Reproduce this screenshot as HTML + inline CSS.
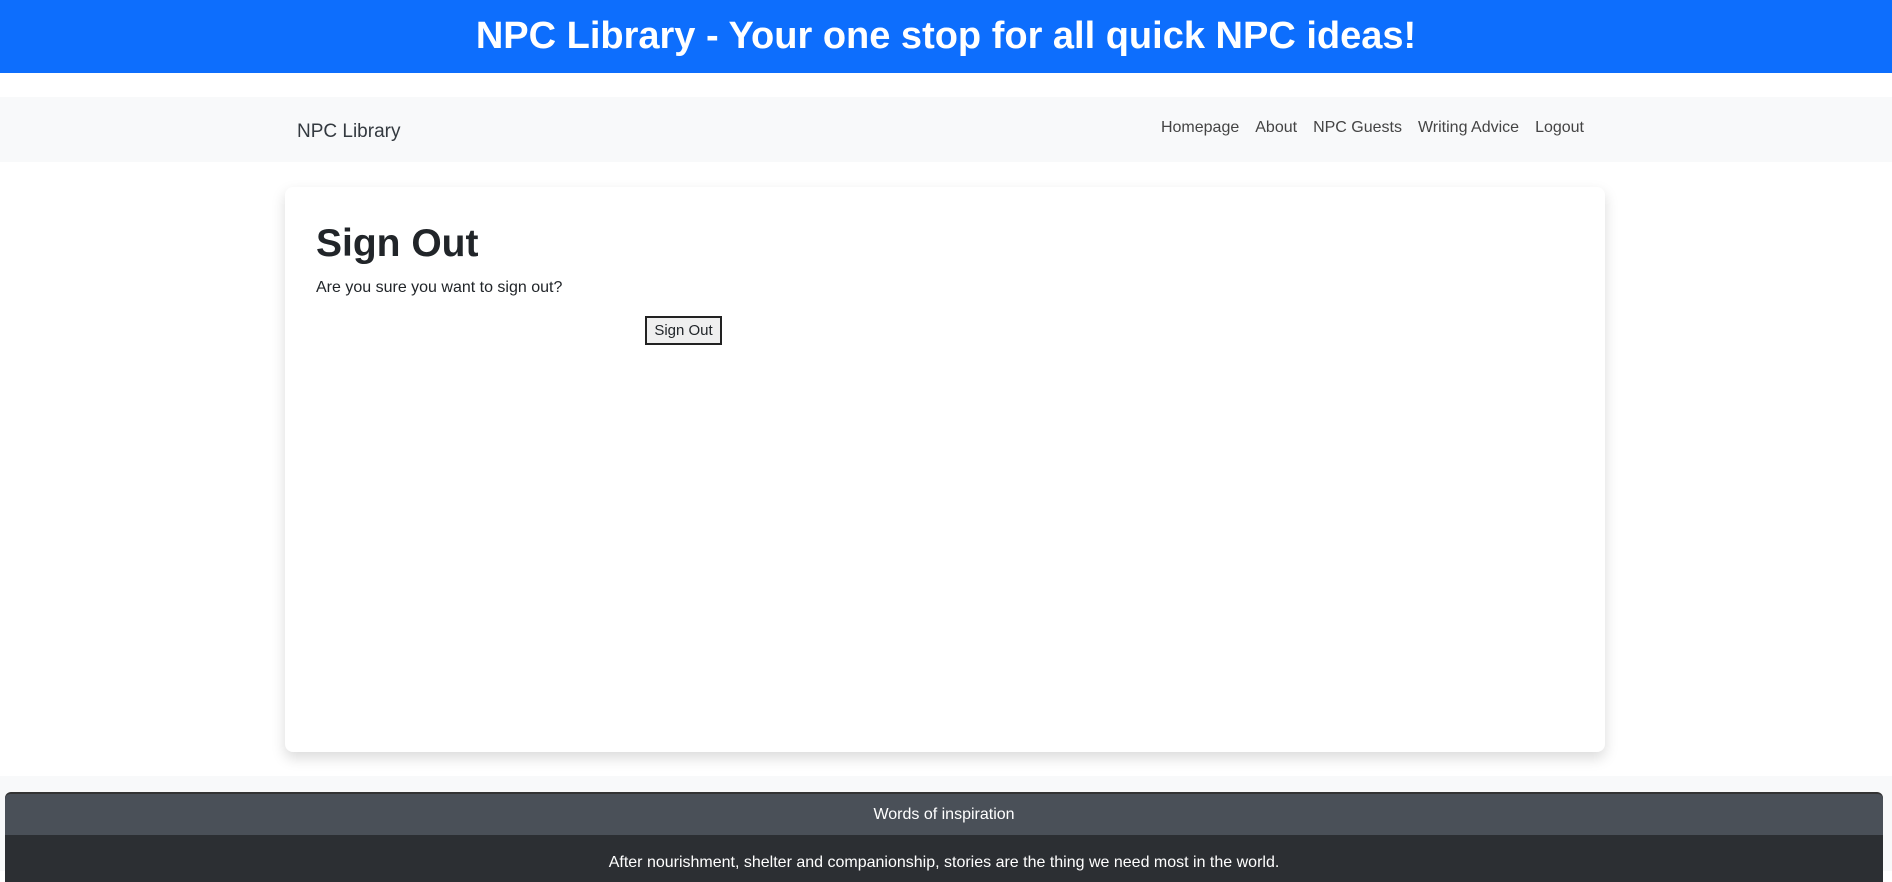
<!DOCTYPE html>
<html><head><meta charset="utf-8"><style>
*{box-sizing:border-box;margin:0;padding:0}
body{width:1892px;height:871px;overflow:hidden;background:#fff;font-family:"Liberation Sans",sans-serif;color:#212529;position:relative}
.top{position:absolute;left:0;top:0;width:1892px;height:73px;background:#0d6efd;color:#fff;font-weight:bold;font-size:38px;text-align:center;line-height:72px}
.nav{position:absolute;left:0;top:97px;width:1892px;height:65px;background:#f8f9fa}
.brand{position:absolute;left:297px;top:121px;font-size:19px;color:#343a40}
.links{position:absolute;right:308px;top:119px;font-size:16px;color:#444;white-space:nowrap}
.links span{margin-left:16px}
.card{position:absolute;left:285px;top:187px;width:1320px;height:565px;background:#fff;border-radius:8px;box-shadow:0 6px 14px rgba(0,0,0,.15)}
h1{position:absolute;left:316px;top:222px;font-size:39px;font-weight:bold}
.p{position:absolute;left:316px;top:279px;font-size:16px}
.btn{position:absolute;left:645px;top:316px;width:77px;height:29px;border:2px solid #222;background:#efefef;font-size:15px;text-align:center;line-height:25px}
.foot{position:absolute;left:0;top:776px;width:1892px;height:95px;background:#f8f9fa}
.fc{position:absolute;left:5px;top:792px;width:1878px;height:90px;border-radius:6px 6px 0 0;background:#2c2f33;border-top:2px solid #333}
.fh{height:41px;background:#4a5058;color:#fff;text-align:center;line-height:41px;font-size:16px;border-radius:5px 5px 0 0}
.fb{color:#fff;text-align:center;font-size:16px;padding-top:19px}
</style></head><body>
<div class="top">NPC Library - Your one stop for all quick NPC ideas!</div>
<div class="nav"></div>
<div class="brand">NPC Library</div>
<div class="links"><span>Homepage</span><span>About</span><span>NPC Guests</span><span>Writing Advice</span><span>Logout</span></div>
<div class="card"></div>
<h1>Sign Out</h1>
<div class="p">Are you sure you want to sign out?</div>
<div class="btn">Sign Out</div>
<div class="foot"></div>
<div class="fc"><div class="fh">Words of inspiration</div><div class="fb">After nourishment, shelter and companionship, stories are the thing we need most in the world.</div></div>
</body></html>
